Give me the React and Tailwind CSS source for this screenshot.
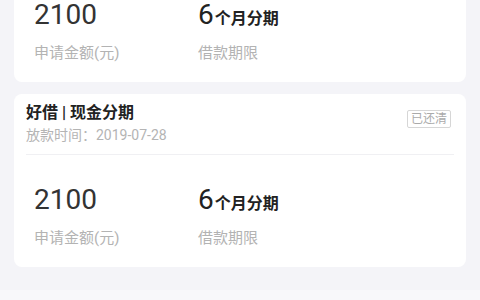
import React from 'react'

const loans = [
  { id: 1, product: '好借 | 现金分期', date: '2019-07-28', status: '已还清', amount: '2100', months: '6' },
  { id: 2, product: '好借 | 现金分期', date: '2019-07-28', status: '已还清', amount: '2100', months: '6' }
]

const font = { fontFamily: 'Roboto, "Noto Sans CJK SC", sans-serif' }

function LoanCard({ loan, className = '' }) {
  return (
    <div className={`rounded-lg bg-white ${className}`}>
      {/* header */}
      <div className="mx-3 flex items-start justify-between border-b border-[#f0f0f3] pt-[8px] pb-[9px]">
        <div>
          <div className="text-[16px] font-bold leading-[22px] text-[#222]">{loan.product}</div>
          <div className="mt-[1px] text-[14px] leading-[20px] text-[#b4b4b4]">放款时间：{loan.date}</div>
        </div>
        <span className="mt-[8px] mr-[3px] rounded-[2px] border border-[#d6d6d6] px-[3px] text-[12px] leading-[16px] text-[#aaa]">
          {loan.status}
        </span>
      </div>

      {/* amount + term */}
      <div className="flex pl-5 pt-[28px] pb-[19px]">
        <div className="w-[164px]">
          <div className="text-[28px] leading-[34px] text-[#333]">{loan.amount}</div>
          <div className="mt-[11px] text-[15px] leading-[20px] text-[#b3b3b3]">申请金额(元)</div>
        </div>
        <div>
          <div className="flex items-baseline text-[#222]">
            <span className="text-[28px] leading-[34px]">{loan.months}</span>
            <span className="ml-[1px] text-[16px] font-bold">个月分期</span>
          </div>
          <div className="mt-[11px] text-[15px] leading-[20px] text-[#b3b3b3]">借款期限</div>
        </div>
      </div>
    </div>
  )
}

export default function App() {
  return (
    <div className="h-[300px] w-[480px] overflow-hidden bg-[#f4f4f8]" style={font}>
      <div className="px-[14px]">
        <LoanCard loan={loans[0]} className="-mt-[91px]" />
        <LoanCard loan={loans[1]} className="mt-[12px]" />
      </div>
      <div className="mt-[23px] h-[10px] bg-[#f8f8fa]" />
    </div>
  )
}
